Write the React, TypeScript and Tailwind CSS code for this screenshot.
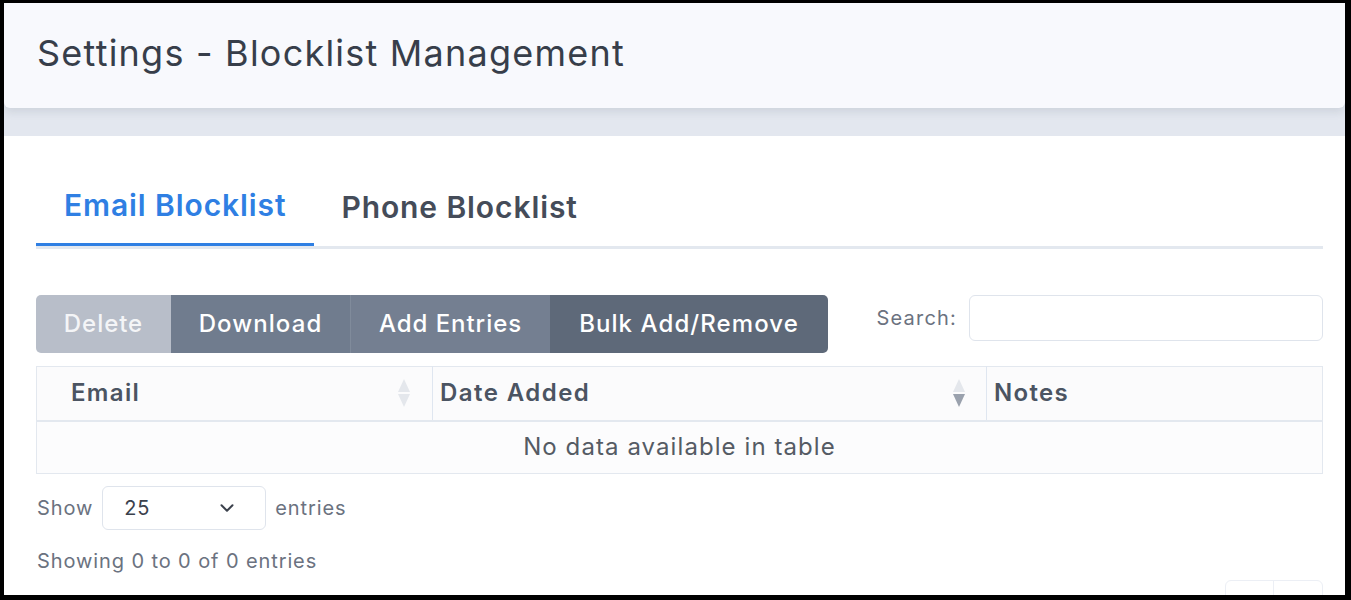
import { ChevronDown } from 'lucide-react'

function SortIcon({ active }: { active?: boolean }) {
  return (
    <svg width="12" height="28" viewBox="0 0 12 28" className="shrink-0">
      <polygon points="6,0 12,13 0,13" fill="#e4e7ec" />
      <polygon points="0,15 12,15 6,28" fill={active ? '#9aa1ad' : '#e4e7ec'} />
    </svg>
  )
}

export default function App() {
  return (
    <div
      className="h-[600px] w-[1351px] overflow-hidden bg-black pb-[5px] pl-[4px] pr-[6px] pt-[3px]"
      style={{ fontFamily: 'Inter, "Noto Sans", sans-serif' }}
    >
      <div className="flex h-full flex-col overflow-hidden bg-white">
        <div className="bg-[#e3e7ef]">
          <header className="flex h-[105px] items-center rounded-b-[6px] bg-[#f8f9fd] pb-[5px] pl-[33px] shadow-[0_4px_8px_rgba(60,70,90,0.12)]">
            <h1 className="text-[36px] font-normal tracking-[0.034em] text-[#373e4a]">
              Settings - Blocklist Management
            </h1>
          </header>
          <div className="h-[28px]" />
        </div>

        <main className="flex-1 pl-[32px] pr-[22px] pt-[40px]">
          <nav className="flex border-b-[3px] border-[#e3e8ef]">
            <div className="-mb-[3px] flex h-[70px] items-center border-b-[3px] border-[#2f7fe3] px-[28px] pb-[8px] text-[30px] font-semibold tracking-[0.03em] text-[#2f7fe3]">
              Email Blocklist
            </div>
            <div className="flex h-[70px] items-center px-[27px] pb-[8px] text-[30px] font-semibold tracking-[0.03em] text-[#454c59]">
              Phone Blocklist
            </div>
          </nav>

          <div className="mt-[46px] flex items-start justify-between">
            <div className="flex h-[58px] overflow-hidden rounded-[5px] text-[24px] font-medium text-white">
              <button className="w-[135px] bg-[#b8bec9] tracking-[0.04em] text-[#f4f5f7]">Delete</button>
              <button className="w-[179px] bg-[#707c8e] tracking-[0.045em]">Download</button>
              <button className="w-[200px] border-l border-[#808b9b] bg-[#747f91] tracking-[0.04em]">Add Entries</button>
              <button className="w-[278px] bg-[#5e6979] tracking-[0.045em]">Bulk Add/Remove</button>
            </div>
            <label className="flex items-center gap-[12px] text-[20px] tracking-[0.06em] text-[#6b7280]">
              Search:
              <input className="h-[46px] w-[354px] rounded-[6px] border border-[#dfe4ec] bg-white outline-none" />
            </label>
          </div>

          <table className="mt-[13px] w-full border-collapse border border-[#e3e8ef] text-[24px] tracking-[0.045em]">
            <thead>
              <tr className="h-[54px] bg-[#fbfbfc] text-left text-[#4b5462]">
                <th className="w-[396px] border-r border-[#dfe6f0] pl-[34px] pr-[22px] font-semibold tracking-[0.055em]">
                  <div className="flex items-center justify-between">
                    Email
                    <SortIcon />
                  </div>
                </th>
                <th className="w-[554px] border-r border-[#dfe6f0] pl-[7px] pr-[21px] font-semibold tracking-[0.06em]">
                  <div className="flex items-center justify-between">
                    Date Added
                    <SortIcon active />
                  </div>
                </th>
                <th className="pl-[7px] font-semibold tracking-[0.055em]">Notes</th>
              </tr>
            </thead>
            <tbody>
              <tr className="h-[53px] border-t-2 border-[#e3e8ef] bg-[#fcfcfd]">
                <td colSpan={3} className="text-center text-[#555b64]">
                  No data available in table
                </td>
              </tr>
            </tbody>
          </table>

          <div className="mt-[12px] flex items-center text-[20px] tracking-[0.045em] text-[#6b7280]">
            <span className="ml-px">Show</span>
            <div className="ml-[9px] flex h-[44px] w-[164px] items-center justify-between rounded-[6px] border border-[#dfe4ec] pl-[21px] pr-[27px] text-[#3b414c]">
              25
              <ChevronDown size={22} strokeWidth={2.2} className="text-[#3b414c]" />
            </div>
            <span className="ml-[9px]">entries</span>
          </div>

          <div className="mt-[16px] flex items-start justify-between">
            <p className="ml-px text-[20px] tracking-[0.045em] text-[#6b7280]">Showing 0 to 0 of 0 entries</p>
            <div className="mt-[34px] flex h-[40px] w-[98px] rounded-[6px] border border-[#eceff5]">
              <div className="w-[48px] border-r border-[#eceff5]" />
            </div>
          </div>
        </main>
      </div>
    </div>
  )
}
